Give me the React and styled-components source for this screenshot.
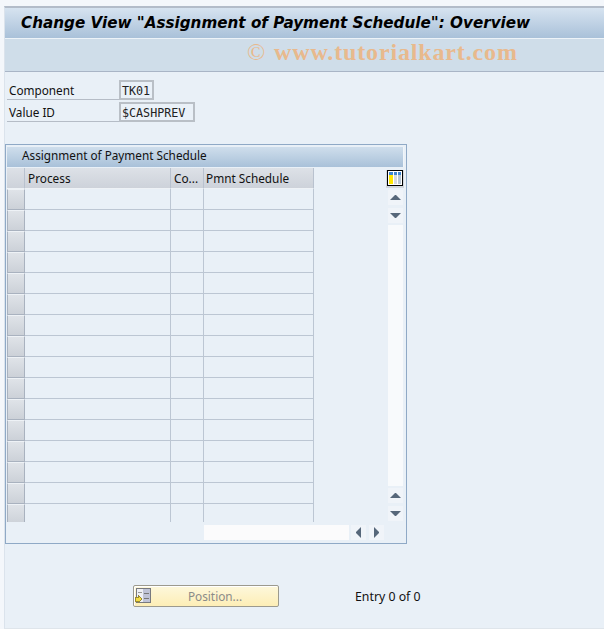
import React from "react";
import styled, { createGlobalStyle } from "styled-components";

const UI = `"Noto Sans", "DejaVu Sans", sans-serif`;

const Global = createGlobalStyle`
  html, body { margin: 0; padding: 0; background: #f4f7fb; }
  body { font-family: ${UI}; font-size: 12px; color: #111; overflow: hidden; }
`;

const Page = styled.div`
  width: 604px; height: 629px; box-sizing: border-box; padding-top: 6px; overflow: hidden;
`;
const Screen = styled.div`
  height: 623px; box-sizing: border-box; margin-left: 4px; background: #e9f0f7;
  border-top: 2px solid #b3bcc9; border-left: 1px solid #dbe3ec; border-bottom: 1px solid #dfe5eb;
  display: flex; flex-direction: column;
`;
const TitleBar = styled.div`
  height: 30px; padding-left: 16px;
  background: linear-gradient(#d6e3f0, #a9c1d9);
  display: flex; align-items: center;
  border-bottom: 1px solid #edf3f8; box-sizing: content-box;
`;
const Title = styled.h1`
  margin: 0 0 1px; font: italic bold 15.2px "DejaVu Sans", sans-serif; color: #000; white-space: nowrap;
`;
const WatermarkBand = styled.div`
  height: 32px; background: #cfdde9; border-bottom: 1px solid #a9b5c6;
  display: flex; align-items: center; padding-left: 242px;
`;
const Watermark = styled.span`
  font: bold 24px "Liberation Serif", serif; color: #e8b98d; white-space: nowrap; letter-spacing: .85px; margin-top: -6px;
`;
const Copy = styled.span`
  font-weight: normal; margin-right: 8px;
`;
const Fields = styled.div`
  margin: 8px 0 0 2px; display: flex; flex-direction: column; gap: 2px;
`;
const FieldRow = styled.div`
  display: flex; height: 20px;
`;
const Label = styled.div`
  width: 110px; padding-left: 2px; border-bottom: 1px solid #b5bcc6; line-height: 21px; height: 19px; font-size: 11.75px;
`;
const Value = styled.div`
  width: ${p => p.$w}px; height: 20px; box-sizing: border-box; border: 2px solid #b9bfc6; background: #eaf1f8;
  font: 11.7px/18px "DejaVu Sans Mono", monospace; padding-left: 1px; color: #222;
`;
const Frame = styled.section`
  margin: 22px 0 0 0; width: 402px; height: 400px; box-sizing: border-box;
  border: 1px solid #8fa9c6; padding: 2px 2px 0 1px; display: flex; flex-direction: column;
`;
const FrameTitle = styled.div`
  height: 20px; padding-left: 15px; line-height: 16px; font-size: 11.75px;
  background: linear-gradient(#cfdeec, #a9c1d9); border-right: 1px solid #f0f5fa;
`;
const TableArea = styled.div`
  display: flex; margin-top: 1px; height: 354px;
`;
const Table = styled.div`
  width: 381px; display: flex; flex-direction: column; height: 354px; overflow: hidden; flex: none;
`;
const HeaderRow = styled.div`
  display: grid; grid-template-columns: 18px 146px 33px 110px; height: 21px; flex: none;
`;
const HeaderCell = styled.div`
  background: linear-gradient(#dde1e7, #cdd2da); border-right: 1px solid #b9c2cf;
  box-sizing: border-box; padding-left: ${p => p.$pad ?? 3}px; line-height: 21px; font-size: 11.8px; white-space: nowrap; overflow: hidden;
  border-bottom: 1px solid #eef2f6;
`;
const Row = styled.div`
  display: grid; grid-template-columns: 18px 146px 33px 110px; height: 21px; flex: none;
`;
const Selector = styled.div`
  box-sizing: border-box; background: linear-gradient(#dfe3e8, #ccd1d8);
  border: 1px solid #a9b2bf; border-top-color: #eef2f6;
`;
const Cell = styled.div`
  box-sizing: border-box; border-right: 1px solid #bcc6d3; border-bottom: 1px solid #bcc6d3;
`;
const SideBar = styled.div`
  width: 15px; display: flex; flex-direction: column; align-items: center; padding-top: 2px;
`;
const ConfigButton = styled.div`
  width: 18px; height: 18px; flex: none; margin: 0 0 2px -1px; background: #d0d6dd;
  display: flex; justify-content: center;
`;
const ScrollBtn = styled.div`
  width: 15px; height: 15px; flex: none; background: #f0f4f9; margin-bottom: ${p => p.$mb ?? 3}px;
  display: flex; align-items: center; justify-content: center;
`;
const Track = styled.div`
  width: 15px; height: 261px; flex: none; background: #f8fafc; margin-bottom: 2px;
`;
const BottomBar = styled.div`
  display: flex; height: 15px; margin: 3px 0 0 197px; align-items: stretch;
`;
const HTrack = styled.div`
  width: 145px; background: #fbfbfc; margin-right: 2px;
`;
const HBtn = styled(ScrollBtn)`
  margin: 0 3px 0 0;
`;
const Footer = styled.div`
  margin: 41px 0 0 128px; display: flex; align-items: center;
`;
const PositionButton = styled.button`
  width: 146px; height: 22px; box-sizing: border-box; padding: 0;
  border: 1px solid #9c9a8e; border-radius: 2px; background: linear-gradient(#fdf8dc, #fdeeb6);
  box-shadow: inset 1px 1px 0 #fff; color: #8b8b88; font: 11.8px ${UI}; text-align: center;
  display: flex; align-items: center; flex: none;
`;
const ButtonText = styled.span`
  flex: 1; margin-left: 1px;
`;
const Entry = styled.div`
  margin-left: 76px; padding-top: 1px; font-size: 12.3px; white-space: nowrap;
`;

const Tri = ({ d }) => {
  const pts = { up: "0,7 5,2 6,2 11,7", down: "0,2 11,2 6,7 5,7", left: "7,0 7,11 2,6 2,5", right: "2,0 2,11 7,6 7,5" }[d];
  const w = d === "up" || d === "down" ? 11 : 9;
  const h = d === "up" || d === "down" ? 9 : 11;
  return <svg width={w} height={h} viewBox={`0 0 ${w} ${h}`}><polygon points={pts} fill="#56677a" /></svg>;
};

const ConfigIcon = () => (
  <svg width="16" height="16" viewBox="0 0 16 16" shapeRendering="crispEdges">
    <rect x="0" y="0" width="16" height="16" fill="#000" />
    <rect x="1" y="1" width="14" height="14" fill="#fff" />
    <rect x="2" y="2" width="12" height="3" fill="#3f86d0" />
    <rect x="2" y="5" width="4" height="9" fill="#ffe600" />
    <rect x="7" y="5" width="3" height="9" fill="#d5d9de" />
    <rect x="11" y="5" width="3" height="9" fill="#b9c6d2" />
    <rect x="6" y="2" width="1" height="12" fill="#fff" />
    <rect x="10" y="2" width="1" height="12" fill="#fff" />
  </svg>
);

const PositionIcon = () => (
  <svg width="16" height="16" viewBox="0 0 16 16" style={{ flex: "none", marginLeft: 1 }} shapeRendering="crispEdges">
    <rect x="1.5" y="0.5" width="14" height="14" fill="#bfc3d6" stroke="#77797f" strokeWidth="1" />
    <rect x="2" y="1" width="6" height="13" fill="#eef0f4" />
    <rect x="9" y="5" width="5" height="1" fill="#777" />
    <rect x="9" y="10" width="5" height="1" fill="#777" />
    <rect x="3" y="4" width="4" height="1" fill="#999" />
    <polygon points="0,9 3,9 3,7 7,11 3,15 3,13 0,13" fill="#f4dc45" stroke="#9a8a30" strokeWidth="1" />
  </svg>
);

const rows = Array.from({ length: 16 });

export default function App() {
  return (
    <Page>
      <Global />
      <Screen>
        <TitleBar><Title>Change View "Assignment of Payment Schedule": Overview</Title></TitleBar>
        <WatermarkBand><Watermark><Copy>©</Copy>www.tutorialkart.com</Watermark></WatermarkBand>
        <Fields>
          <FieldRow><Label>Component</Label><Value $w={35}>TK01</Value></FieldRow>
          <FieldRow><Label>Value ID</Label><Value $w={76}>$CASHPREV</Value></FieldRow>
        </Fields>
        <Frame>
          <FrameTitle>Assignment of Payment Schedule</FrameTitle>
          <TableArea>
            <Table>
              <HeaderRow>
                <HeaderCell />
                <HeaderCell>Process</HeaderCell>
                <HeaderCell>Co...</HeaderCell>
                <HeaderCell $pad={2}>Pmnt Schedule</HeaderCell>
              </HeaderRow>
              {rows.map((_, i) => (
                <Row key={i}><Selector /><Cell /><Cell /><Cell /></Row>
              ))}
            </Table>
            <SideBar>
              <ConfigButton><ConfigIcon /></ConfigButton>
              <ScrollBtn><Tri d="up" /></ScrollBtn>
              <ScrollBtn $mb={2}><Tri d="down" /></ScrollBtn>
              <Track />
              <ScrollBtn><Tri d="up" /></ScrollBtn>
              <ScrollBtn><Tri d="down" /></ScrollBtn>
            </SideBar>
          </TableArea>
          <BottomBar>
            <HTrack />
            <HBtn><Tri d="left" /></HBtn>
            <HBtn><Tri d="right" /></HBtn>
          </BottomBar>
        </Frame>
        <Footer>
          <PositionButton><PositionIcon /><ButtonText>Position...</ButtonText></PositionButton>
          <Entry>Entry 0 of 0</Entry>
        </Footer>
      </Screen>
    </Page>
  );
}
